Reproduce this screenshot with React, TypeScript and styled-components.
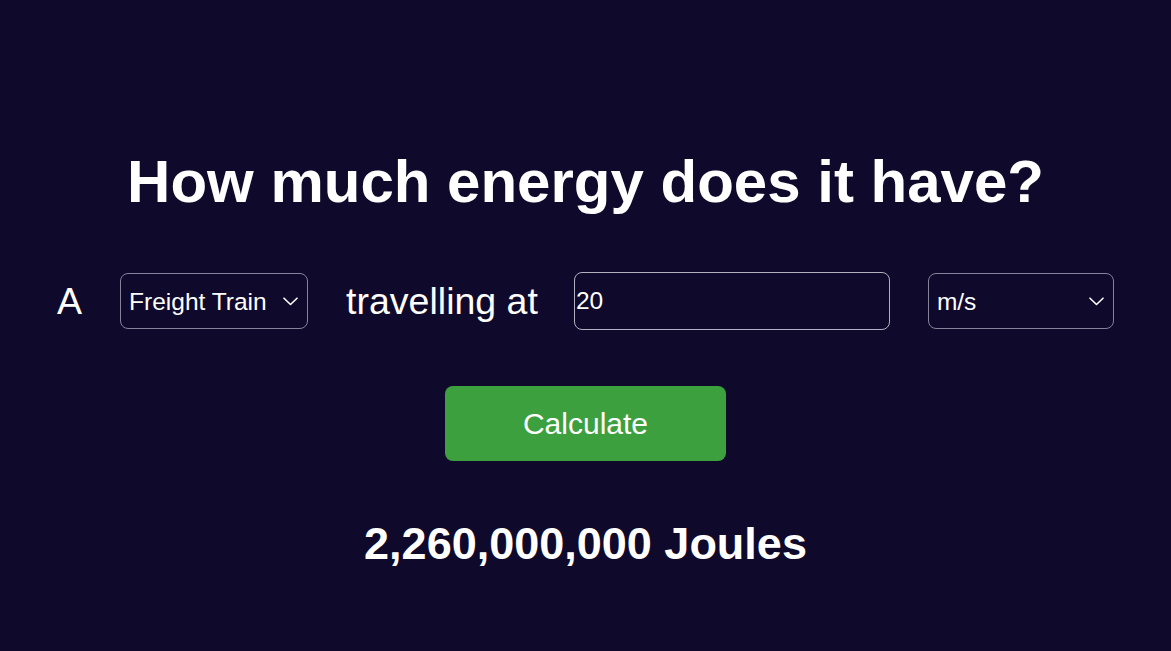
import React, { useState } from "react";
import styled, { createGlobalStyle } from "styled-components";

const Global = createGlobalStyle`
  html, body {
    margin: 0;
    padding: 0;
    background: #0f0a2b;
  }
  body {
    font-family: "Liberation Sans", Arial, sans-serif;
    color: #ffffff;
  }
`;

const Page = styled.main`
  min-height: 651px;
  box-sizing: border-box;
  padding-top: 147px;
  display: flex;
  flex-direction: column;
  align-items: center;
  gap: 56px;
  font-family: "Liberation Sans", Arial, sans-serif;
`;

const Title = styled.h1`
  margin: 0;
  font-size: 60px;
  font-weight: 700;
  line-height: normal;
  color: #ffffff;
`;

const Row = styled.div`
  display: flex;
  align-items: center;
  justify-content: center;
  gap: 38px;
  width: 100%;
`;

const Label = styled.span`
  font-size: 37.5px;
  line-height: normal;
  color: #ffffff;
`;

const SelectWrap = styled.div`
  position: relative;
  display: inline-flex;
`;

const Select = styled.select<{ $width?: number }>`
  appearance: none;
  -webkit-appearance: none;
  box-sizing: border-box;
  height: 56px;
  ${(p) => (p.$width ? `width: ${p.$width}px;` : "")}
  padding: 0 40px 0 8px;
  font-family: "Liberation Sans", Arial, sans-serif;
  font-size: 24.5px;
  color: #ffffff;
  background: transparent;
  border: 1px solid #85829a;
  border-radius: 8px;
  outline: none;
  option {
    color: #000;
  }
`;

const Chevron = styled.svg`
  position: absolute;
  right: 10px;
  top: 50%;
  margin-top: -4px;
  width: 15px;
  height: 9px;
  pointer-events: none;
`;

const NumberInput = styled.input`
  box-sizing: border-box;
  width: 316px;
  height: 58px;
  margin-left: -2px;
  padding: 0 1px;
  font-family: "Liberation Sans", Arial, sans-serif;
  font-size: 24.5px;
  color: #ffffff;
  background: transparent;
  border: 1px solid #b3b1bf;
  border-radius: 8px;
  outline: none;
`;

const Button = styled.button`
  width: 281px;
  height: 75px;
  border: none;
  border-radius: 8px;
  background: #3ca03f;
  color: #ffffff;
  font-family: "Liberation Sans", Arial, sans-serif;
  font-size: 30px;
  cursor: pointer;
`;

const Result = styled.div`
  font-size: 45px;
  font-weight: 700;
  line-height: normal;
  color: #ffffff;
  margin-top: 1px;
`;

const ChevronIcon = () => (
  <Chevron viewBox="0 0 15 9" fill="none">
    <path d="M1 1.2 L7.5 7.5 L14 1.2" stroke="#ffffff" strokeWidth="1.6" strokeLinecap="round" strokeLinejoin="round" />
  </Chevron>
);

export default function App() {
  const [thing, setThing] = useState("Freight Train");
  const [speed, setSpeed] = useState("20");
  const [unit, setUnit] = useState("m/s");

  return (
    <>
      <Global />
      <Page>
        <Title>How much energy does it have?</Title>
        <Row>
          <Label>A</Label>
          <SelectWrap>
            <Select value={thing} onChange={(e) => setThing(e.target.value)}>
              <option>Freight Train</option>
              <option>Car</option>
              <option>Bullet</option>
            </Select>
            <ChevronIcon />
          </SelectWrap>
          <Label>travelling at</Label>
          <NumberInput value={speed} onChange={(e) => setSpeed(e.target.value)} />
          <SelectWrap>
            <Select $width={186} value={unit} onChange={(e) => setUnit(e.target.value)}>
              <option>m/s</option>
              <option>km/h</option>
              <option>mph</option>
            </Select>
            <ChevronIcon />
          </SelectWrap>
        </Row>
        <Button>Calculate</Button>
        <Result>2,260,000,000 Joules</Result>
      </Page>
    </>
  );
}
